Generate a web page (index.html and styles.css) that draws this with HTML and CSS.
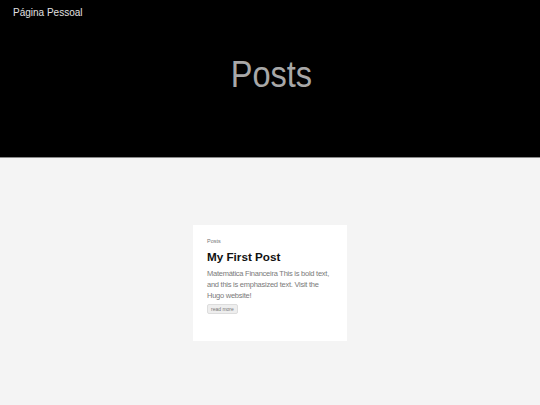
FILE: index.html
```html
<!DOCTYPE html>
<html lang="pt">
<head>
<meta charset="utf-8">
<title>Posts</title>
<link rel="stylesheet" href="styles.css">
</head>
<body>
<header class="hero">
  <div class="brand">Página Pessoal</div>
  <h1 class="hero-title">Posts</h1>
</header>
<main class="main">
  <article class="card">
    <div class="card-section">Posts</div>
    <h2 class="card-title">My First Post</h2>
    <p class="card-text">Matemática Financeira This is bold text, and this is emphasized text. Visit the Hugo website!</p>
    <span class="btn">read more</span>
  </article>
</main>
</body>
</html>
```
FILE: styles.css
```css
html, body {
  margin: 0;
  padding: 0;
}
body {
  font-family: "Liberation Sans", Arial, sans-serif;
  background: #f4f4f4;
  width: 540px;
  height: 405px;
  overflow: hidden;
}
.hero {
  background: #000;
  height: 158px;
  border-bottom: 1px solid #8a8a8a;
  box-sizing: border-box;
  padding: 7px 13px 0;
}
.brand {
  color: #e0e0e0;
  font-size: 10px;
  line-height: 12px;
}
.hero-title {
  margin: 36px 0 0;
  text-align: center;
  color: #a8a8a8;
  font-weight: normal;
  font-size: 37px;
  line-height: 40px;
  transform: scaleX(0.88);
  transform-origin: 269px 0;
}
.main {
  display: flex;
  justify-content: center;
  padding-top: 67px;
}
.card {
  background: #fff;
  width: 154px;
  height: 116px;
  box-sizing: border-box;
  padding: 12px 14px;
  display: flex;
  flex-direction: column;
  align-items: flex-start;
}
.card-section {
  color: #777;
  font-size: 5.5px;
  line-height: 8px;
}
.card-title {
  margin: 5px 0 0;
  font-size: 11.7px;
  line-height: 14px;
  font-weight: bold;
  color: #111;
}
.card-text {
  margin: 4px 0 0;
  color: #7a7a7a;
  font-size: 7.5px;
  letter-spacing: -0.25px;
  line-height: 11px;
}
.btn {
  margin-top: 3px;
  font-size: 5px;
  line-height: 8px;
  color: #777;
  background: #eee;
  border: 1px solid #ddd;
  border-radius: 2px;
  padding: 0 3px;
}
```
